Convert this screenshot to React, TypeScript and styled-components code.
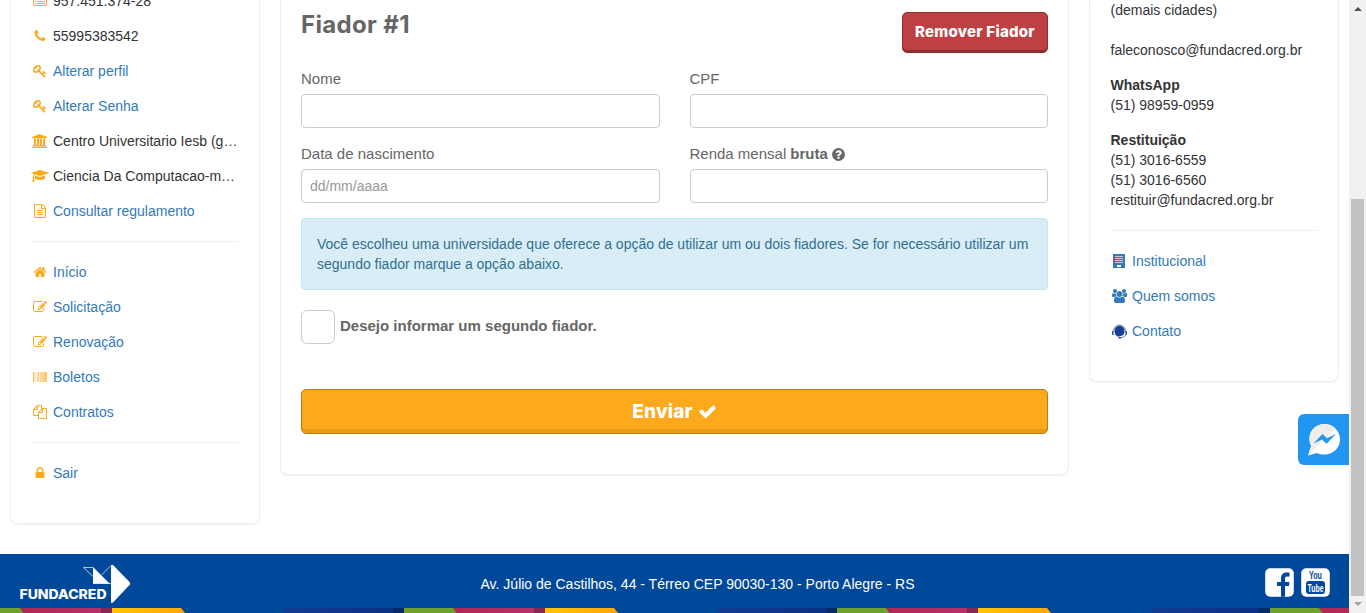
import React from "react";
import styled, { createGlobalStyle, css } from "styled-components";

const Global = createGlobalStyle`
  * { box-sizing: border-box; }
  body {
    margin: 0;
    background: #fff;
    color: #333;
    font: 14px/20px "Liberation Sans", Arial, sans-serif;
    overflow: hidden;
  }
`;

const orange = "#fda91c";
const linkBlue = "#337ab7";

const Window = styled.div`
  display: flex;
  height: 613px;
  overflow: hidden;
`;

const Page = styled.div`
  flex: 1;
  min-width: 0;
  display: flex;
  flex-direction: column;
  justify-content: space-between;
  position: relative;
`;

const Columns = styled.main`
  display: grid;
  grid-template-columns: 250px 789px 250px;
  column-gap: 20px;
  align-items: start;
  padding-left: 10px;
`;

const Card = styled.section`
  border: 1px solid #eee;
  border-top: 0;
  border-radius: 0 0 8px 8px;
  box-shadow: 0 1px 2px rgba(0, 0, 0, 0.06);
  padding: 0 20px 40px;
`;

const ItemList = styled.ul<{ $shift?: number }>`
  list-style: none;
  margin: ${(p) => p.$shift ?? 0}px 0 0;
  padding: 0;
  display: flex;
  flex-direction: column;
  gap: 15px;
`;

const Item = styled.li<{ $link?: boolean }>`
  display: flex;
  height: 20px;
  color: ${(p) => (p.$link ? linkBlue : "#333")};
`;

const ItemText = styled.span`
  white-space: nowrap;
`;

const IconSlot = styled.span<{ $blue?: boolean }>`
  flex: 0 0 ${(p) => (p.$blue ? 18 : 17)}px;
  min-width: 0;
  margin-right: ${(p) => (p.$blue ? 4 : 5)}px;
  display: flex;
  align-items: center;
  justify-content: center;
  color: ${(p) => (p.$blue ? linkBlue : orange)};
  svg { flex-shrink: 0; }
`;

const Rule = styled.hr`
  border: 0;
  border-top: 1px solid #eee;
  margin: 20px 0;
`;

const FormHeader = styled.header`
  display: flex;
  justify-content: space-between;
  align-items: flex-start;
  height: 69px;
`;

const Title = styled.h2`
  margin: 11px 0 0;
  font: 700 24px/27px Inter, sans-serif;
  letter-spacing: 0.35px;
  color: #666;
`;

const buttonFace = css`
  color: #fff;
  font-family: Inter, sans-serif;
  font-weight: 800;
  border-radius: 5px;
  padding: 0;
`;

const RemoveButton = styled.button`
  ${buttonFace}
  width: 146px;
  height: 41px;
  margin-top: 12px;
  padding-bottom: 2px;
  font-size: 15px;
  letter-spacing: 0.25px;
  background: #bf4042;
  border: 1px solid #8c2f31;
  box-shadow: inset 0 -2px 0 #8c2f31;
`;

const SendButton = styled.button`
  ${buttonFace}
  display: flex;
  align-items: center;
  justify-content: center;
  gap: 5px;
  width: 100%;
  height: 45px;
  margin-top: 45px;
  font-size: 19px;
  letter-spacing: 0.15px;
  background: ${orange};
  border: 1px solid #b97d16;
  box-shadow: inset 0 -4px 0 #e99c18;
`;

const Fields = styled.div`
  display: grid;
  grid-template-columns: 1fr 1fr;
  gap: 16px 30px;
`;

const Field = styled.label`
  display: flex;
  flex-direction: column;
  gap: 5px;
  font-size: 15px;
  color: #666;
`;

const LabelText = styled.span`
  display: flex;
  align-items: center;
  gap: 4px;
`;

const HelpMark = styled.span`
  display: flex;
  margin-left: -1px;
`;

const Input = styled.input`
  width: 100%;
  height: 34px;
  border: 1px solid #ccc;
  border-radius: 4px;
  padding: 0 8px;
  background: #fff;
  font: 14px "Liberation Sans", Arial, sans-serif;
  &::placeholder { color: #999; }
`;

const Alert = styled.p`
  margin: 15px 0 20px;
  height: 72px;
  padding: 15px;
  border: 1px solid #bce8f1;
  border-radius: 4px;
  background: #d9edf7;
  color: #31708f;
`;

const CheckRow = styled.label`
  display: flex;
  gap: 5px;
  height: 34px;
  font-weight: bold;
  font-size: 15px;
  line-height: 31px;
  color: #666;
`;

const CheckBox = styled.input`
  appearance: none;
  width: 34px;
  height: 34px;
  margin: 0;
  border: 1px solid #ccc;
  border-radius: 6px;
`;

const ContactBlock = styled.p<{ $gap?: number }>`
  margin: 0 0 ${(p) => p.$gap ?? 15}px;
  padding-left: 0.5px;
`;

const Footer = styled.footer`
  height: 59px;
  background: #004899;
  color: #fff;
`;

const FooterBar = styled.div`
  height: 54px;
  display: grid;
  grid-template-columns: 300px 1fr 300px;
  padding: 0 19px;
`;

const Address = styled.span`
  text-align: center;
  line-height: 60px;
  padding-left: 46px;
`;

const Social = styled.div`
  display: flex;
  justify-content: flex-end;
  gap: 7px;
  padding-top: 14px;
`;

const StripArt = styled.svg`
  display: block;
`;

const Chat = styled.button`
  position: absolute;
  right: 0;
  top: 414px;
  width: 51px;
  height: 51px;
  padding: 0;
  border: 0;
  border-radius: 6px 0 0 6px;
  background: #2196f3;
`;

const ScrollBar = styled.aside`
  width: 17px;
  background: #f1f1f1;
  display: flex;
  flex-direction: column;
  align-items: center;
  padding: 7px 0 7px;
`;

const Thumb = styled.div`
  width: 13px;
  height: 397px;
  margin: 188px 0 auto;
  background: #c1c1c1;
`;

const Arrow = styled.i<{ $down?: boolean }>`
  border: 4px solid transparent;
  border-top: ${(p) => (p.$down ? "4px solid #a3a3a3" : "0")};
  border-bottom: ${(p) => (p.$down ? "0" : "4px solid #505050")};
`;

/* Glyphs drawn on a 1792-unit em; w is the advance width of each one. */
const glyphs = {
  list: { w: 1792, d: "M384 1184v64q0 13-9.500 22.500t-22.500 9.500h-64q-13 0-22.500-9.500t-9.500-22.500v-64q0-13 9.500-22.500t22.500-9.500h64q13 0 22.500 9.500t9.500 22.500zM384 928v64q0 13-9.500 22.500t-22.500 9.500h-64q-13 0-22.500-9.500t-9.500-22.500v-64q0-13 9.500-22.500t22.500-9.500h64q13 0 22.500 9.500t9.500 22.500zM384 640h-128v128h128zM1536 1152h-1024v128h1024zM1536 896h-1024v128h1024zM1536 640h-1024v128h1024zM1664 1376v-864H128v864q0 32 32 32h1472q32 0 32-32zM1792 288v1088q0 66-47 113t-113 47H160q-66 0-113-47T0 1376V288q0-66 47-113t113-47h1472q66 0 113 47t47 113z" },
  phone: { w: 1792, d: "M1600 1240q0 27-10 70.500t-21 68.500q-21 50-122 106-94 51-186 51-27 0-53-3.500t-57.500-12.500-47-14.500-55.500-20.500-49-18q-98-35-175-83-127-79-264-216t-216-264q-48-77-83-175-3-9-18-49t-20.500-55.500-14.500-47-12.500-57.500-3.500-53q0-92 51-186 56-101 106-122 25-11 68.500-21t70.500-10q14 0 21 3 18 6 53 76 11 19 30 54t35 63.500 31 53.500q3 4 17.500 25t21.500 35.500 7 28.500q0 20-28.500 50t-62 55-62 53-28.500 46q0 9 5 22.500t8.500 20.500 14 24 11.500 19q76 137 174 235t235 174q2 1 19 11.500t24 14 20.500 8.500 22.500 5q18 0 46-28.500t53-62 55-62 50-28.500q14 0 28.500 7t35.500 21.500 25 17.500q25 15 53.500 31t63.500 35 54 30q70 35 76 53 3 7 3 21z" },
  key: { w: 1792, d: "M832 512q0-80-56-136t-136-56-136 56-56 136q0 42 19 83-41-19-83-19-80 0-136 56t-56 136 56 136 136 56 136-56 56-136q0-42-19-83 41 19 83 19 80 0 136-56t56-136zm851 704q0 17-49 66t-66 49q-9 0-28.500-16t-36.500-33-38.500-40-24.500-26l-96 96 220 220q28 28 28 68 0 42-39 81t-81 39q-40 0-68-28l-671-671q-176 131-365 131-163 0-265.500-102.500t-102.500-265.500q0-160 95-313t248-248 313-95q163 0 265.500 102.500t102.500 265.500q0 189-131 365l355 355 96-96q-3-3-26-24.500t-40-38.500-33-36.500-16-28.500q0-17 49-66t66-49q13 0 23 10 6 6 46 44.500t82 79.500 86.500 86 73 78 28.500 41z" },
  university: { w: 1920, d: "M960 0l960 384v128h-128q0 26-20.500 45t-48.500 19h-1526q-28 0-48.500-19t-20.500-45h-128v-128zm-704 640h256v768h128v-768h256v768h128v-768h256v768h128v-768h256v768h59q28 0 48.500 19t20.500 45v64h-1664v-64q0-26 20.500-45t48.500-19h59v-768zm1595 960q28 0 48.500 19t20.500 45v128h-1920v-128q0-26 20.500-45t48.500-19h1782z" },
  cap: { w: 2304, d: "M1774 836l18 316q4 69-82 128t-235 93.500-323 34.500-323-34.500-235-93.500-82-128l18-316 574 181q22 7 48 7t48-7zm530-324q0 23-22 31l-1120 352q-4 1-10 1t-10-1l-652-206q-43 34-71 111.500t-34 178.500q63 36 63 109 0 69-58 107l58 433q2 14-8 25-9 11-24 11h-192q-15 0-24-11-10-11-8-25l58-433q-58-38-58-107 0-73 65-111 11-207 98-330l-333-104q-22-8-22-31t22-31l1120-352q4-1 10-1t10 1l1120 352q22 8 22 31z" },
  file: { w: 1792, d: "M1596 380q28 28 48 76t20 88v1152q0 40-28 68t-68 28h-1344q-40 0-68-28t-28-68v-1600q0-40 28-68t68-28h896q40 0 88 20t76 48zm-444-244v376h376q-10-29-22-41l-313-313q-12-12-41-22zm384 1528v-1024h-416q-40 0-68-28t-28-68v-416h-768v1536h1280zm-1024-864q0-14 9-23t23-9h704q14 0 23 9t9 23v64q0 14-9 23t-23 9h-704q-14 0-23-9t-9-23v-64zm736 224q14 0 23 9t9 23v64q0 14-9 23t-23 9h-704q-14 0-23-9t-9-23v-64q0-14 9-23t23-9h704zm0 256q14 0 23 9t9 23v64q0 14-9 23t-23 9h-704q-14 0-23-9t-9-23v-64q0-14 9-23t23-9h704z" },
  home: { w: 1792, d: "M1472 992v480q0 26-19 45t-45 19h-384v-384h-256v384h-384q-26 0-45-19t-19-45v-480q0-1 .5-3t.5-3l575-474 575 474q1 2 1 6zm223-69l-62 74q-8 9-21 11h-3q-13 0-21-7l-692-577-692 577q-12 8-24 7-13-2-21-11l-62-74q-8-10-7-23.500t11-21.500l719-599q32-26 76-26t76 26l244 204v-195q0-14 9-23t23-9h192q14 0 23 9t9 23v408l219 182q10 8 11 21.500t-7 23.500z" },
  edit: { w: 1792, d: "M888 1184l116-116-152-152-116 116v56h96v96h56zm440-720q-16-16-33 1l-350 350q-17 17-1 33t33-1l350-350q17-17 1-33zm80 594v190q0 119-84.500 203.500t-203.500 84.500h-832q-119 0-203.500-84.500t-84.500-203.500v-832q0-119 84.500-203.500t203.500-84.500h832q63 0 117 25 15 7 18 23 3 17-9 29l-49 49q-14 14-32 8-23-6-45-6h-832q-66 0-113 47t-47 113v832q0 66 47 113t113 47h832q66 0 113-47t47-113v-126q0-13 9-22l64-64q15-15 35-7t20 29zm-96-738l288 288-672 672h-288v-288zm444 132l-92 92-288-288 92-92q28-28 68-28t68 28l152 152q28 28 28 68t-28 68z" },
  barcode: { w: 1792, d: "M0 256h63v1280H0zM94 256h32v1280H94zM189 256h31v1280h-31zM346 256h31v1280h-31zM503 256h62v1280h-62zM660 256h31v1280h-31zM723 256h31v1280h-31zM786 256h31v1280h-31zM943 256h63v1280h-63zM1100 256h63v1280h-63zM1226 256h63v1280h-63zM1352 256h63v1280h-63zM1446 256h63v1280h-63zM1572 256h94v1280h-94zM1697 256h31v1280h-31zM1760 256h32v1280h-32z" },
  copy: { w: 1792, d: "M1696 384q40 0 68 28t28 68v1216q0 40-28 68t-68 28h-960q-40 0-68-28t-28-68v-288h-544q-40 0-68-28t-28-68v-672q0-40 20-88t48-76l408-408q28-28 76-48t88-20h416q40 0 68 28t28 68v328q68-40 128-40h416zm-544 213l-299 299h299v-299zm-640-384l-299 299h299v-299zm196 647l316-316v-416h-384v416q0 40-28 68t-68 28h-416v640h512v-256q0-40 20-88t48-76zm956 804v-1152h-384v416q0 40-28 68t-68 28h-416v640h896z" },
  lock: { w: 1792, d: "M640 768h512v-192q0-106-75-181t-181-75-181 75-75 181v192zm832 96v576q0 40-28 68t-68 28h-960q-40 0-68-28t-28-68v-576q0-40 28-68t68-28h32v-192q0-184 132-316t316-132 316 132 132 316v192h32q40 0 68 28t28 68z" },
  users: { w: 1920, d: "M593 896q-162 5-265 128h-134q-82 0-138-40.500t-56-118.500q0-353 124-353 6 0 43.500 21t97.500 42.500 119 21.500q67 0 133-23-5 37-5 66 0 159 93 283zm1071 637q0 120-73 189.500t-194 69.500h-874q-121 0-194-69.500t-73-189.500q0-53 3.500-103.500t14-109 26.500-108.500 43-97.500 62-81 85.500-53.500 111.500-20q10 0 43 21.500t73 48 107 48 135 21.500 135-21.500 107-48 73-48 43-21.500q61 0 111.500 20t85.500 53.500 62 81 43 97.500 26.500 108.500 14 109 3.500 103.500zm-1024-1277q0 106-75 181t-181 75-181-75-75-181 75-181 181-75 181 75 75 181zm704 384q0 159-112.500 271.500t-271.500 112.500-271.500-112.500-112.500-271.500 112.500-271.500 271.500-112.500 271.500 112.500 112.500 271.500zm576 225q0 78-56 118.500t-138 40.500h-134q-103-123-265-128 93-124 93-283 0-29-5-66 66 23 133 23 59 0 119-21.500t97.500-42.500 43.500-21q124 0 124 353zm-128-609q0 106-75 181t-181 75-181-75-75-181 75-181 181-75 181 75 75 181z" },
  check: { w: 1792, d: "M1671 566q0 40-28 68l-724 724-136 136q-28 28-68 28t-68-28l-136-136-362-362q-28-28-28-68t28-68l136-136q28-28 68-28t68 28l294 295 656-657q28-28 68-28t68 28l136 136q28 28 28 68z" },
  help: { w: 1792, d: "M1024 1376v-192q0-14-9-23t-23-9h-192q-14 0-23 9t-9 23v192q0 14 9 23t23 9h192q14 0 23-9t9-23zm256-672q0-88-55.500-163t-138.500-116-170-41q-243 0-371 213-15 24 8 42l132 100q7 6 19 6 16 0 25-12 53-68 86-92 34-24 86-24 48 0 85.500 26t37.500 59q0 38-20 61t-68 45q-63 28-115.500 86.500t-52.500 125.500v36q0 14 9 23t23 9h192q14 0 23-9t9-23q0-19 21.500-49.500t54.500-49.500q32-18 49-28.500t46-35 44.500-48 28-60.500 12.500-81zm384 192q0 209-103 385.500t-279.500 279.500-385.500 103-385.500-103-279.500-279.500-103-385.500 103-385.500 279.500-279.500 385.500-103 385.500 103 279.500 279.500 103 385.500z" },
};

type GlyphName = keyof typeof glyphs;

function Glyph({ name, size = 14 }: { name: GlyphName; size?: number }) {
  const g = glyphs[name];
  return (
    <svg width={(g.w * size) / 1792} height={size} viewBox={`0 0 ${g.w} 1792`} fill="currentColor">
      <path fillRule={name === "list" ? "evenodd" : "nonzero"} d={g.d} />
    </svg>
  );
}

function BuildingIcon() {
  return (
    <svg width="12" height="14" viewBox="0 0 12 14">
      <path d="M0 0h12v14H0z" fill="#337ab7" />
      <path d="M2 2.500h8M2 4.500h8M2 6.500h8M2 8.500h8" stroke="#e5bcc4" />
      <path d="M4 11h4v2H4z" fill="#fff" />
    </svg>
  );
}

function HeadsetIcon() {
  return (
    <svg width="15" height="15" viewBox="0 0 15 15" fill="none">
      <path d="M1.500 7.500a6 6.500 0 0 1 12 0" stroke="#5278b4" />
      <path d="M.8 7v4M14.200 7v4" stroke="#17479e" strokeWidth="1.400" />
      <path d="M2.500 7a5 5.200 0 0 1 10 0c0 2.700-.8 4.300-3 4.700l-3.500 1C3.800 11.500 2.500 10 2.500 7z" fill="#173f94" />
      <path d="M13.500 11c-.8 1.800-2.500 2.500-5 2.500" stroke="#5278b4" />
      <path d="M6.500 13.800h2.500" stroke="#17479e" strokeWidth="1.500" />
    </svg>
  );
}

function Logo() {
  return (
    <svg width="113" height="54" viewBox="0 0 113 54" fill="#fff">
      <text x="0.500" y="44.500" fontFamily="Inter, sans-serif" fontSize="13" fontWeight="800" textLength="87" lengthAdjust="spacingAndGlyphs">FUNDACRED</text>
      <path d="M92 11v38l2-.5 17-18v-2L94 11z" />
      <path d="M74 13v17h17z" />
      <path d="M64.500 13.500H74M64.500 13.500l10 9.500M82.500 21l9.500-9.500M74 29.500h18" stroke="#d5e2f0" strokeWidth=".8" fill="none" />
    </svg>
  );
}

function FacebookIcon() {
  return (
    <svg width="29" height="29" viewBox="0 0 29 29">
      <rect x=".2" y=".2" width="28.600" height="28.600" rx="5" fill="#fff" />
      <path d="M16 28.800V18h-4v-4h4v-3.500C16 6.500 18.200 4.500 21.500 4.500H24.500v4h-2.300c-1.600 0-2.200.8-2.200 2.300V14h4.500l-.6 4H20v10.800z" fill="#004899" />
    </svg>
  );
}

function YoutubeIcon() {
  return (
    <svg width="29" height="29" viewBox="0 0 29 29" fontFamily="Liberation Sans, sans-serif" fontWeight="bold" textAnchor="middle">
      <rect x=".2" y=".2" width="28.600" height="28.600" rx="5" fill="#fff" />
      <text x="14.500" y="11" fontSize="10.500" fill="#004899" textLength="13" lengthAdjust="spacingAndGlyphs">You</text>
      <rect x="5" y="13" width="19" height="13" rx="3" fill="#004899" />
      <text x="14.500" y="23.500" fontSize="10.500" fill="#fff" textLength="16" lengthAdjust="spacingAndGlyphs">Tube</text>
    </svg>
  );
}

function MessengerIcon() {
  return (
    <svg width="51" height="51" viewBox="0 0 51 51">
      <path d="M26.500 10C18 10 11.500 16.500 11.500 24.500c0 3 .7 5.600 1.700 7.500L10 41.500l9-2.500c2.200 1 4.700 1.500 7.500 1.500C35.500 40.500 42 33.500 42 25.500S35.500 10 26.500 10z" fill="#fff" />
      <path d="M26.500 10C18 10 11.500 16.500 11.500 24.500c0 3 .7 5.600 1.700 7.500L10 41.500l27.500-27C34.500 11.500 30.500 10 26.500 10z" fill="#eee" />
      <path d="M15.500 29.500l9-9.500 4.500 4.200 9-4.200-9.500 9.700-4.500-4.200z" fill="#2196f3" />
    </svg>
  );
}

function Strip() {
  return (
    <StripArt width="1349" height="5" viewBox="0 0 1349 5">
      <defs>
        <linearGradient id="pink"><stop stopColor="#b12653" /><stop offset="1" stopColor="#b53167" /></linearGradient>
        <linearGradient id="gold"><stop stopColor="#ffc400" /><stop offset="1" stopColor="#ffa50a" /></linearGradient>
        <linearGradient id="navy"><stop stopColor="#143b90" /><stop offset="1" stopColor="#0b2f83" /></linearGradient>
      </defs>
      {[-29, 404, 837, 1270].map((x) => (
        <g key={x} transform={`translate(${x} 0)`}>
          <path d="M0 0h49l4 5H0z" fill="#6fa02c" />
          <path d="M49 0h81v5H53z" fill="url(#pink)" />
          <path d="M130 0h11v5h-11z" fill="#842752" />
          <path d="M141 0h69l4 5h-73z" fill="url(#gold)" />
          <path d="M317 0h105v5H313z" fill="url(#navy)" />
          <path d="M422 0h11v5h-11z" fill="#072a66" />
        </g>
      ))}
    </StripArt>
  );
}

function Row({ icon, text, link, blue }: { icon: React.ReactNode; text: string; link?: boolean; blue?: boolean }) {
  return (
    <Item $link={link}>
      <IconSlot $blue={blue}>{icon}</IconSlot>
      <ItemText>{text}</ItemText>
    </Item>
  );
}

export default function App() {
  return (
    <Window>
      <Global />
      <Page>
        <Columns>
          <Card>
            <ItemList $shift={-9}>
              <Row icon={<Glyph name="list" />} text="957.451.374-28" />
              <Row icon={<Glyph name="phone" />} text="55995383542" />
              <Row icon={<Glyph name="key" />} text="Alterar perfil" link />
              <Row icon={<Glyph name="key" />} text="Alterar Senha" link />
              <Row icon={<Glyph name="university" />} text="Centro Universitario Iesb (g…" />
              <Row icon={<Glyph name="cap" />} text="Ciencia Da Computacao-m…" />
              <Row icon={<Glyph name="file" />} text="Consultar regulamento" link />
            </ItemList>
            <Rule />
            <ItemList>
              <Row icon={<Glyph name="home" />} text="Início" link />
              <Row icon={<Glyph name="edit" />} text="Solicitação" link />
              <Row icon={<Glyph name="edit" />} text="Renovação" link />
              <Row icon={<Glyph name="barcode" />} text="Boletos" link />
              <Row icon={<Glyph name="copy" />} text="Contratos" link />
            </ItemList>
            <Rule />
            <ItemList>
              <Row icon={<Glyph name="lock" />} text="Sair" link />
            </ItemList>
          </Card>

          <Card>
            <FormHeader>
              <Title>Fiador #1</Title>
              <RemoveButton>Remover Fiador</RemoveButton>
            </FormHeader>
            <Fields>
              <Field><LabelText>Nome</LabelText><Input /></Field>
              <Field><LabelText>CPF</LabelText><Input /></Field>
              <Field><LabelText>Data de nascimento</LabelText><Input placeholder="dd/mm/aaaa" /></Field>
              <Field><LabelText>Renda mensal <b>bruta</b> <HelpMark><Glyph name="help" size={15} /></HelpMark></LabelText><Input /></Field>
            </Fields>
            <Alert>
              Você escolheu uma universidade que oferece a opção de utilizar um ou dois fiadores. Se for necessário utilizar um segundo fiador marque a opção abaixo.
            </Alert>
            <CheckRow><CheckBox type="checkbox" />Desejo informar um segundo fiador.</CheckRow>
            <SendButton>Enviar <Glyph name="check" size={19} /></SendButton>
          </Card>

          <Card>
            <ContactBlock $gap={20}>(demais cidades)</ContactBlock>
            <ContactBlock>faleconosco@fundacred.org.br</ContactBlock>
            <ContactBlock><b>WhatsApp</b><br />(51) 98959-0959</ContactBlock>
            <ContactBlock $gap={20}><b>Restituição</b><br />(51) 3016-6559<br />(51) 3016-6560<br />restituir@fundacred.org.br</ContactBlock>
            <Rule />
            <ItemList>
              <Row icon={<BuildingIcon />} text="Institucional" link blue />
              <Row icon={<Glyph name="users" />} text="Quem somos" link blue />
              <Row icon={<HeadsetIcon />} text="Contato" link blue />
            </ItemList>
          </Card>
        </Columns>

        <Footer>
          <FooterBar>
            <Logo />
            <Address>Av. Júlio de Castilhos, 44 - Térreo CEP 90030-130 - Porto Alegre - RS</Address>
            <Social><FacebookIcon /><YoutubeIcon /></Social>
          </FooterBar>
          <Strip />
        </Footer>
        <Chat aria-label="Messenger"><MessengerIcon /></Chat>
      </Page>
      <ScrollBar>
        <Arrow />
        <Thumb />
        <Arrow $down />
      </ScrollBar>
    </Window>
  );
}
